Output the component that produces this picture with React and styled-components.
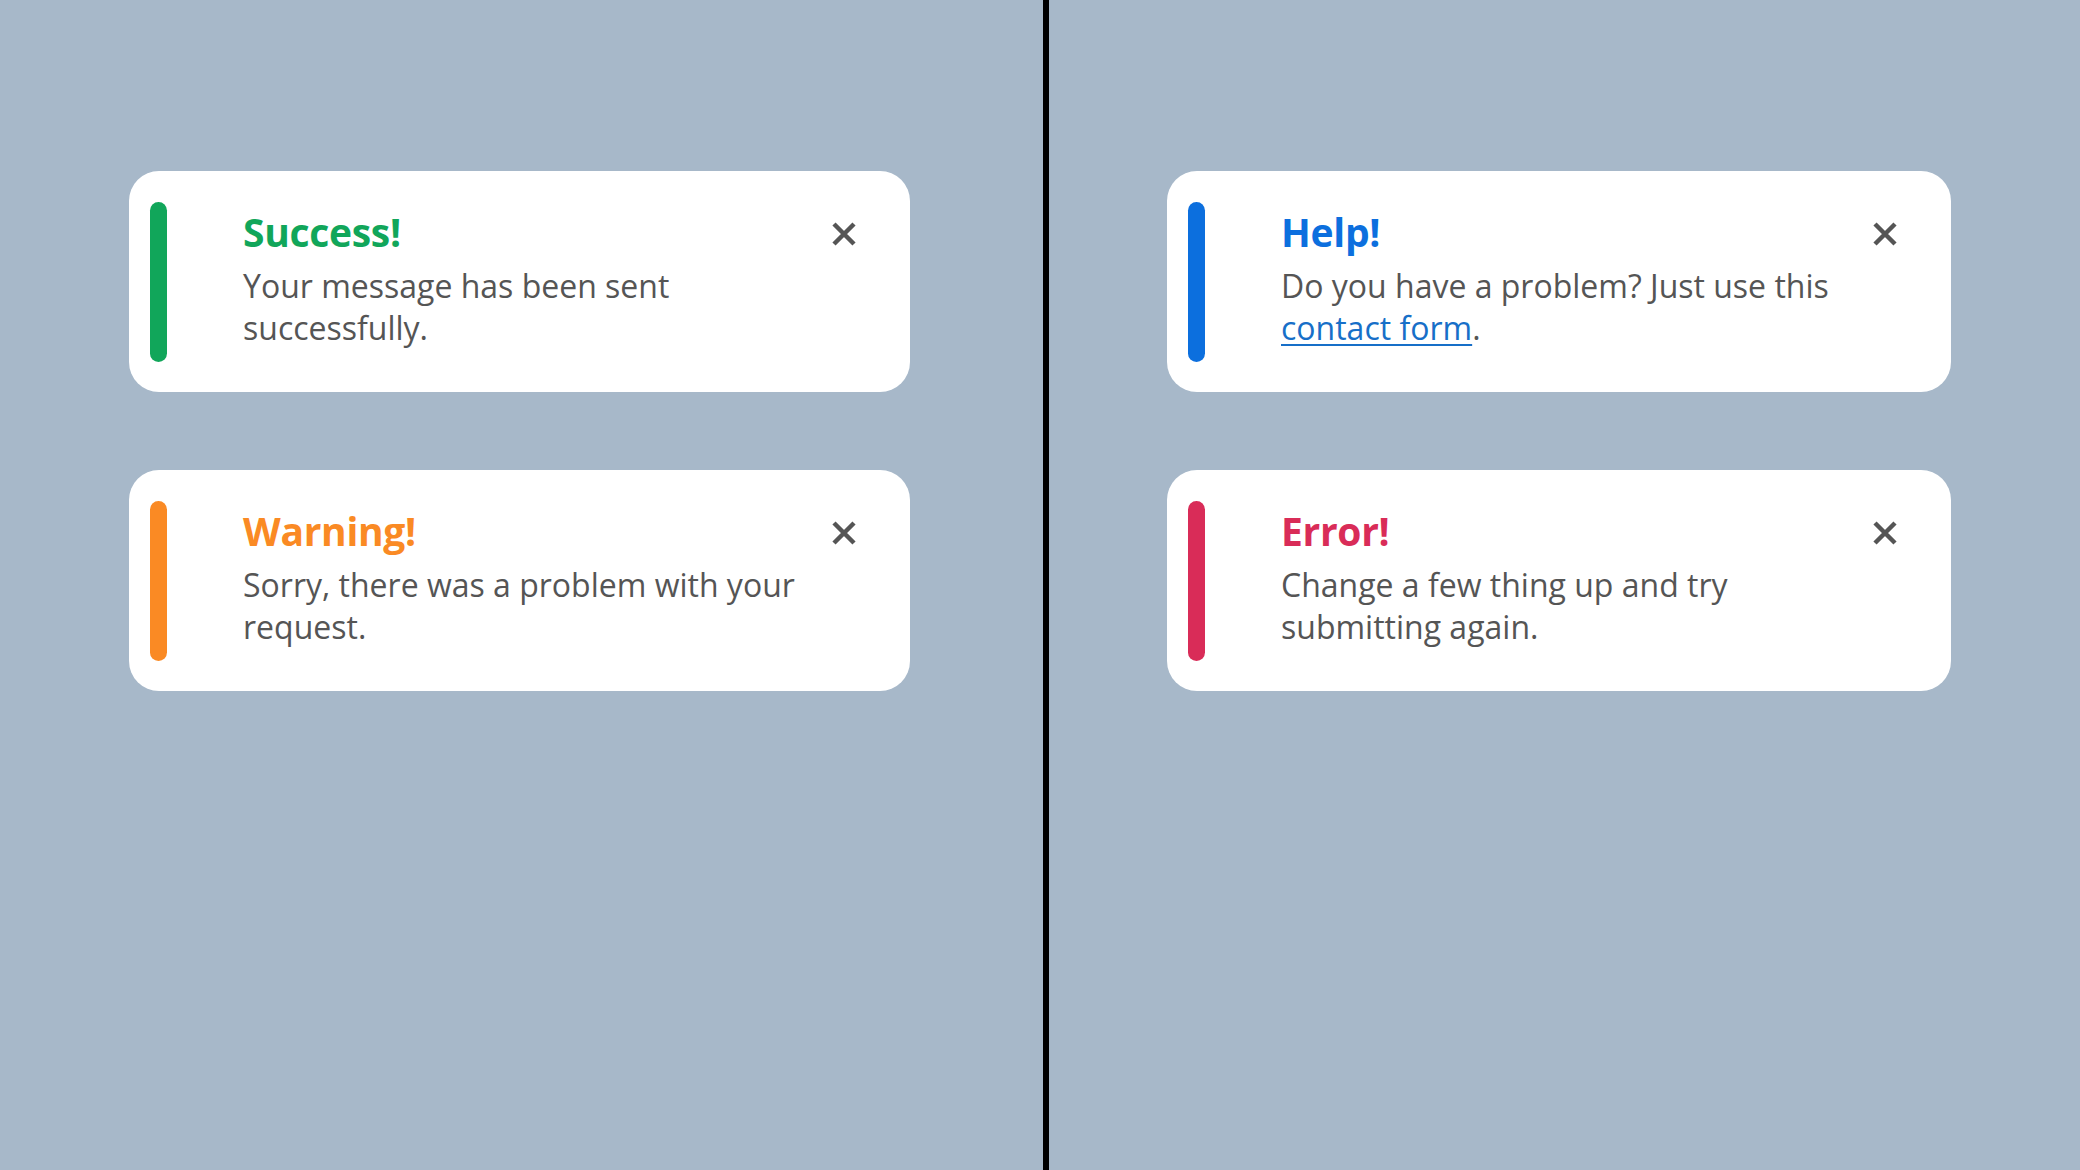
import styled, { createGlobalStyle } from 'styled-components'

const GlobalStyle = createGlobalStyle`
  html, body {
    margin: 0;
    padding: 0;
    background: #a7b8c9;
  }
  body {
    font-family: "Open Sans", "Noto Sans", sans-serif;
  }
`

const Page = styled.div`
  display: grid;
  grid-template-columns: 1043px 6px 1fr;
  height: 100vh;
  background: #a7b8c9;
`
const Pane = styled.div`
  display: flex;
  flex-direction: column;
  gap: 78px;
  padding-top: 171px;
  padding-left: ${({ $inset }) => $inset}px;
`
const Divider = styled.div`
  background: #000;
`
const Card = styled.div`
  background: #fff;
  border-radius: 30px;
  box-sizing: border-box;
  display: flex;
  height: 221px;
  padding: 31px 42px 30px 21px;
  width: ${({ $width }) => $width}px;
`
const Bar = styled.div`
  background: ${({ $color }) => $color};
  border-radius: 9px;
  flex-shrink: 0;
  width: 17px;
`
const Content = styled.div`
  flex: 1;
  margin-left: 76px;
  padding-top: 6px;
`
const Title = styled.h2`
  color: ${({ $color }) => $color};
  font-size: 39px;
  font-weight: 700;
  letter-spacing: -0.3px;
  line-height: 48px;
  margin: 0 0 9px;
`
const Text = styled.p`
  color: #555;
  font-size: 32px;
  line-height: 42px;
  margin: 0;
`
const Link = styled.a`
  color: #176fc8;
  text-decoration: underline;
  text-decoration-thickness: 2px;
  text-underline-offset: 4px;
`
const Close = styled.button`
  align-items: center;
  align-self: flex-start;
  background: none;
  border: none;
  cursor: pointer;
  display: flex;
  flex-shrink: 0;
  height: 48px;
  justify-content: center;
  margin-top: 8px;
  padding: 0;
  width: 48px;
`

const CloseIcon = () => (
  <svg width="24" height="24" viewBox="0 0 24 24">
    <path d="M2 2L22 22M22 2L2 22" stroke="#555" strokeWidth="4.5" fill="none" />
  </svg>
)

function Alert({ color, title, width, children }) {
  return (
    <Card $width={width}>
      <Bar $color={color} />
      <Content>
        <Title $color={color}>{title}</Title>
        <Text>{children}</Text>
      </Content>
      <Close aria-label="Close"><CloseIcon /></Close>
    </Card>
  )
}

export default function App() {
  return (
    <>
      <GlobalStyle />
      <Page>
        <Pane $inset={129}>
          <Alert color="#11a65a" title="Success!" width={781}>
            Your message has been sent successfully.
          </Alert>
          <Alert color="#fa8a24" title="Warning!" width={781}>
            Sorry, there was a problem with your request.
          </Alert>
        </Pane>
        <Divider />
        <Pane $inset={118}>
          <Alert color="#0c6fde" title="Help!" width={784}>
            Do you have a problem? Just use this <Link href="#">contact form</Link>.
          </Alert>
          <Alert color="#d92c58" title="Error!" width={784}>
            Change a few thing up and try submitting again.
          </Alert>
        </Pane>
      </Page>
    </>
  )
}
